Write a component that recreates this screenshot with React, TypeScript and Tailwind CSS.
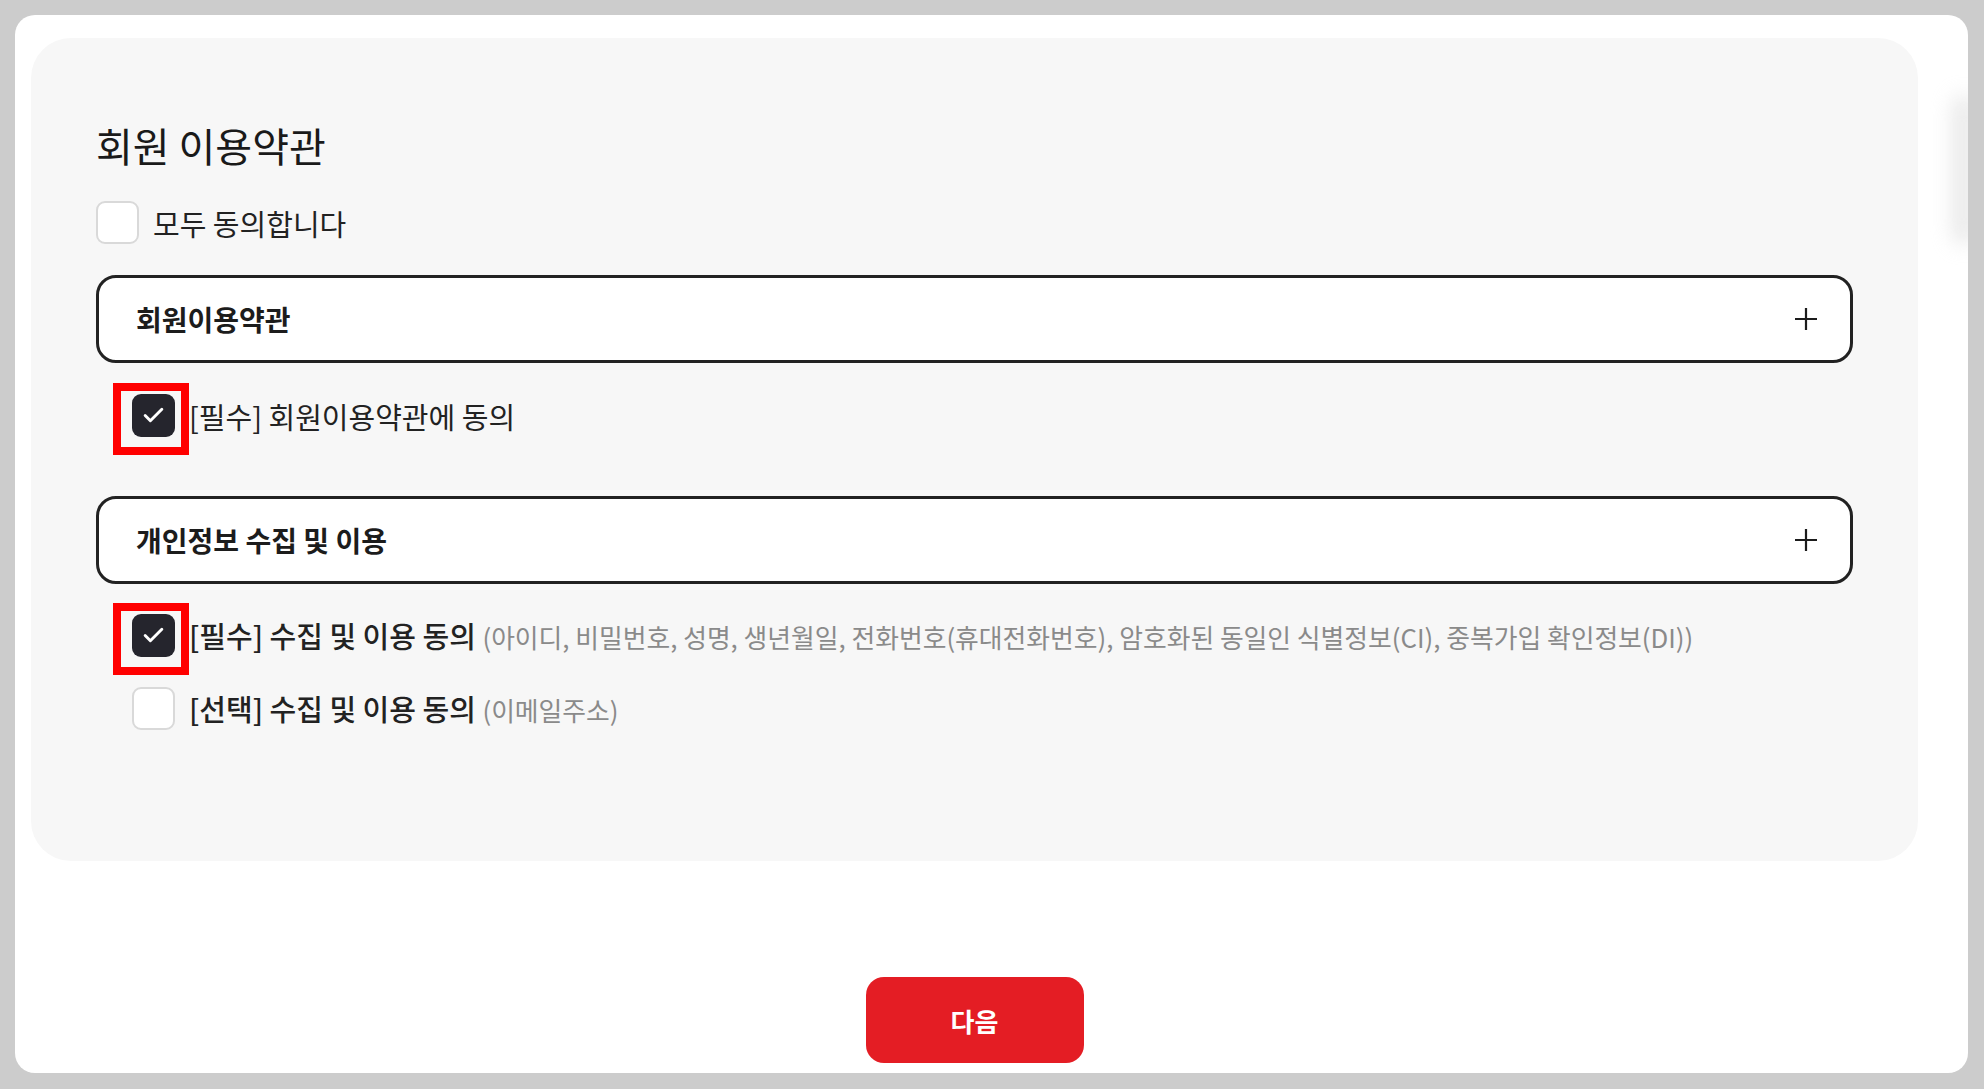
import { Check } from "lucide-react";

// Checkbox box used in the agreement list
function CheckBox({ checked, marked }: { checked?: boolean; marked?: boolean }) {
  return (
    <div className="relative shrink-0">
      {checked ? (
        <div className="flex h-[43px] w-[43px] items-center justify-center rounded-[9px] bg-[#25252d]">
          <Check size={25} strokeWidth={2.8} color="#ffffff" />
        </div>
      ) : (
        <div className="h-[43px] w-[43px] rounded-[9px] border-2 border-[#d9d9d9] bg-white" />
      )}
      {/* red annotation box drawn over the checkbox */}
      {marked && (
        <div className="absolute left-[-19px] top-[-11px] h-[72px] w-[76px] border-[8px] border-[#ff0000]" />
      )}
    </div>
  );
}

// Accordion header row
function TermsHeader({ title }: { title: string }) {
  return (
    <div className="flex h-[88px] items-center justify-between rounded-[20px] border-[3px] border-[#222222] bg-white pl-[37px] pr-[32px]">
      <span className="text-[28px] font-bold text-[#1c1c1c]">{title}</span>
      <svg width="24" height="24" viewBox="0 0 24 24" fill="none">
        <path d="M12 1v22M1 12h22" stroke="#1c1c1c" strokeWidth="2.2" />
      </svg>
    </div>
  );
}

export default function App() {
  return (
    <div
      className="min-h-screen bg-[#cccccc] pb-[16px] pl-[15px] pr-[16px] pt-[15px]"
      style={{ fontFamily: '"Noto Sans CJK KR", "Noto Sans", sans-serif' }}
    >
      <div className="relative h-[1058px] overflow-hidden rounded-[20px] bg-white pl-[16px] pr-[50px] pt-[23px]">
        {/* faint scroll shadow on the right edge */}
        <div className="absolute right-[-8px] top-[80px] h-[150px] w-[24px] rounded-full bg-[#d4d4d4] opacity-50 blur-[10px]" />

        <div className="h-[823px] rounded-[40px] bg-[#f7f7f7] px-[65px] pt-[79px]">
          <h1 className="text-[40px] leading-[56px] text-[#1a1a1a]">회원 이용약관</h1>

          <div className="mt-[28px] flex items-center gap-[14px]">
            <CheckBox />
            <span className="text-[29px] leading-[40px] text-[#222222]">모두 동의합니다</span>
          </div>

          <div className="mt-[31px]">
            <TermsHeader title="회원이용약관" />
          </div>

          <div className="ml-[36px] mt-[31px] flex items-center gap-[14px]">
            <CheckBox checked marked />
            <span className="text-[29px] leading-[40px] text-[#222222]">[필수] 회원이용약관에 동의</span>
          </div>

          <div className="mt-[59px]">
            <TermsHeader title="개인정보 수집 및 이용" />
          </div>

          <div className="ml-[36px] mt-[30px] flex items-center gap-[14px]">
            <CheckBox checked marked />
            <span className="text-[29px] leading-[40px] font-medium text-[#222222]">
              [필수] 수집 및 이용 동의{" "}
              <span className="text-[25.8px] font-normal text-[#8a8a8a]">
                (아이디, 비밀번호, 성명, 생년월일, 전화번호(휴대전화번호), 암호화된 동일인 식별정보(CI), 중복가입 확인정보(DI))
              </span>
            </span>
          </div>

          <div className="ml-[36px] mt-[30px] flex items-center gap-[14px]">
            <CheckBox />
            <span className="text-[29px] leading-[40px] font-medium text-[#222222]">
              [선택] 수집 및 이용 동의{" "}
              <span className="text-[25.8px] font-normal text-[#8a8a8a]">(이메일주소)</span>
            </span>
          </div>
        </div>

        <button className="mx-auto mt-[116px] flex h-[86px] w-[218px] items-center justify-center rounded-[18px] bg-[#e41d24] text-[26px] font-bold text-white">
          다음
        </button>
      </div>
    </div>
  );
}
